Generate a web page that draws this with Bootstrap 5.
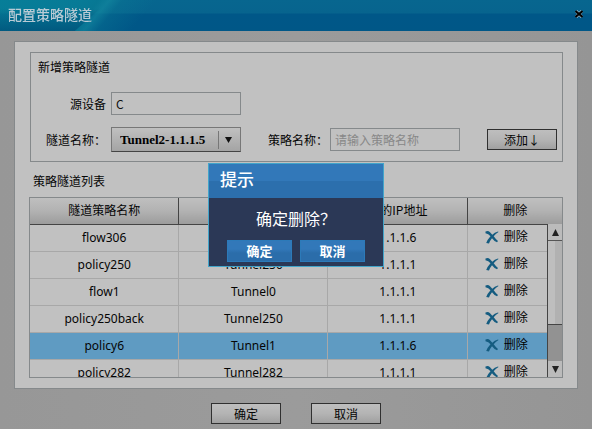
<!DOCTYPE html>
<html lang="zh-CN">
<head>
<meta charset="utf-8">
<meta name="viewport" content="width=device-width, initial-scale=1">
<title>配置策略隧道</title>
<link href="https://cdn.jsdelivr.net/npm/bootstrap@5.3.0/dist/css/bootstrap.min.css" rel="stylesheet">
<style>
body { font: 12px/16px "Noto Sans", "Noto Sans CJK SC", sans-serif; color: #050505; background: linear-gradient(90deg, #979797, #9b9b9b 50%, #959595); }
.zh { font-family: "Noto Sans CJK SC", sans-serif; }
.title-bar { height: 31px; padding: 0 8px; background: linear-gradient(#07668f 0, #07648e 13px, #005788 14px, #005787 100%); }
.title-bar::before { content: ""; position: absolute; inset: 0; background: linear-gradient(130deg, #078a9daa 0, #07899c99 60px, #07849799 76px, #148fa299 84px, #0a7d9655 94px, #0a729300 120px); }
.title-bar::after { content: ""; position: absolute; left: 0; top: 0; bottom: 0; width: 110px; background: linear-gradient(#004f7800 8px, #004f78bb 100%); clip-path: polygon(0 0, 100% 0, 68% 100%, 0 100%); }
.title-bar h1 { font-size: 14px; line-height: 20px; font-weight: 500; color: #b9cbd5; position: relative; z-index: 1; margin-top: -4px; }
.close-x { width: 10px; height: 10px; margin-top: -3px; position: relative; z-index: 1; }
.panel { margin: 10px 14px 0; padding: 10px 14px; background: #c1c1c1; border: 1px solid #85898b; }
.group-box { margin-left: 1px; border: 1px solid #85898b; padding: 5px 5px 9px 0; }
.group-box h2, .list-title { font-size: 12px; line-height: 18px; font-weight: 400; }
.group-box h2 { padding-left: 7px; }
.lbl { width: 80px; padding-right: 5px; text-align: right; }
.lbl.second { width: 89px; padding-right: 2px; }
.box { width: 130px; height: 23px; border: 1px solid #85898b; border-radius: 0; background: #c1c1c1; padding: 0 4px; font-size: 12px; color: #111; }
.box::placeholder { color: #888; opacity: 1; }
.drop { width: 130px; height: 25px; padding: 0 8px; appearance: none; border: 1px solid #777; border-bottom-color: #444; border-radius: 0; font: bold 13px "Liberation Serif", serif; color: #000;
  background: url("data:image/svg+xml,%3Csvg xmlns='http://www.w3.org/2000/svg' width='22' height='18'%3E%3Cpath d='M.5 0v18' stroke='%23777'/%3E%3Cpath d='M7 6h7l-3.500 6z' fill='%23111'/%3E%3C/svg%3E") right 0 center no-repeat, linear-gradient(#c0c0c0, #a4a4a4); }
.tool-btn { width: 70px; height: 21px; padding: 0; border: 1px solid #303030; border-radius: 0; background: linear-gradient(#bebebe, #b4b4b4 50%, #a0a0a0); font-size: 12px; line-height: 18px; color: #050505; }
.tool-btn:hover { border-color: #303030; }
.list-title { margin: 10px 0 7px 4px; }
.grid-box { height: 181px; border: 1px solid #85898b; }
.grid-table { table-layout: fixed; line-height: 16px; }
.grid-table th { height: 26px; padding: 0 0 1px; font-weight: 400; vertical-align: middle; background: linear-gradient(#bfbfbf, #b2b2b2 50%, #9c9c9c); border-bottom: 1px solid #444; border-right: 1px solid #444; }
.grid-table td { height: 27px; padding: 1px 0 0; vertical-align: middle; border-bottom: 1px solid #a8a8a8; border-right: 1px solid #a8a8a8; font-family: "Noto Sans", "Noto Sans CJK SC", sans-serif; }
.grid-table th:last-child, .grid-table td:last-child { border-right: 0; }
.grid-table td:last-child { padding: 0 18px 2px 0; }
.grid-table .picked td { background: #5f9bc2; }
.c1 { width: 28%; } .c2 { width: 28%; } .c3 { width: 26.3%; }
.del { display: inline-flex; align-items: center; font-size: 12px; line-height: 16px; padding: 0; border: 0; border-radius: 0; color: #000; }
.del svg { width: 14px; height: 14px; margin-right: 5px; }
.scroller { top: 26px; width: 15px; border-left: 1px solid #444; background: #929292; }
.scroller button { height: 16px; padding: 0; border: 0; background: #bbb; line-height: 0; }
.scroller .thumb { height: 85px; border-top: 1px solid #555; border-bottom: 1px solid #444; background: linear-gradient(90deg, #bebebe 50%, #b1b1b1 50%); }
.actions { padding: 14px 0 4px; gap: 30px; }
.prompt { width: 176px; border: 1px solid #42a5ca; background: #2b3856; color: #fff; }
.prompt h2 { height: 34px; padding-left: 11px; font-size: 17px; line-height: 30px; font-weight: 500; background: linear-gradient(#3278b9 50%, #2c6fad 50%); }
.prompt p { font-size: 16px; line-height: 24px; padding: 8px 0 10px; }
.prompt .btn { width: 65px; height: 22px; padding: 0; border: 1px solid #2c7ab9; border-radius: 0; background: linear-gradient(#3278b9 40%, #2b6daa 60%); color: #fff; font-weight: 700; font-size: 13px; line-height: 20px; }
</style>
<script src="https://cdn.jsdelivr.net/npm/bootstrap@5.3.0/dist/js/bootstrap.bundle.min.js"></script>
</head>
<body>
<header class="title-bar position-relative d-flex align-items-center justify-content-between">
  <h1 class="zh mb-0">配置策略隧道</h1>
  <button type="button" class="close-x btn p-0 border-0 d-flex align-items-center justify-content-center" aria-label="关闭">
    <svg width="8" height="8" viewBox="0 0 8 8"><path d="M1 1l6 6M7 1L1 7" stroke="#a9c4d2" stroke-width="3"/><path d="M.5 1l7 6M7.500 1L.5 7" stroke="#000" stroke-width="2.200"/></svg>
  </button>
</header>
<main class="zh">
  <section class="panel">
    <form class="group-box">
      <h2 class="mb-0">新增策略隧道</h2>
      <div class="d-flex align-items-center mt-3">
        <label class="lbl" for="device">源设备</label>
        <input class="box" id="device" type="text" value="C">
      </div>
      <div class="d-flex align-items-center mt-2 pt-1">
        <label class="lbl" for="tunnel">隧道名称：</label>
        <select class="drop" id="tunnel"><option>Tunnel2-1.1.1.5</option></select>
        <label class="lbl second" for="policy">策略名称：</label>
        <input class="box" id="policy" type="text" placeholder="请输入策略名称">
        <button type="button" class="btn tool-btn ms-auto">添加↓</button>
      </div>
    </form>
    <h2 class="list-title">策略隧道列表</h2>
    <div class="grid-box position-relative overflow-hidden">
      <table class="grid-table w-100 text-center">
        <thead><tr><th class="c1">隧道策略名称</th><th class="c2">隧道名称</th><th class="c3">目的IP地址</th><th>删除</th></tr></thead>
        <tbody id="rows"></tbody>
      </table>
      <div class="scroller position-absolute end-0 bottom-0 d-flex flex-column">
        <button type="button" aria-label="向上滚动"><svg width="7" height="7" viewBox="0 0 7 7"><path d="M0 7L3.500 0L7 7z" fill="#222"/></svg></button>
        <div class="thumb"></div>
        <button type="button" class="mt-auto" aria-label="向下滚动"><svg width="7" height="7" viewBox="0 0 7 7"><path d="M0 0h7L3.500 7z" fill="#222"/></svg></button>
      </div>
    </div>
  </section>
  <div class="actions d-flex justify-content-center">
    <button type="button" class="btn tool-btn">确定</button>
    <button type="button" class="btn tool-btn">取消</button>
  </div>
</main>
<div class="position-fixed top-0 start-0 w-100 vh-100 d-flex align-items-center justify-content-center">
  <div class="prompt zh" role="dialog" aria-modal="true" aria-labelledby="prompt-title">
    <h2 class="m-0" id="prompt-title">提示</h2>
    <p class="m-0 text-center">确定删除？</p>
    <div class="d-flex justify-content-center gap-2 pb-1">
      <button type="button" class="btn">确定</button>
      <button type="button" class="btn">取消</button>
    </div>
  </div>
</div>
<script>
const rows = [
  ["flow306", "Tunnel306", "1.1.1.6"],
  ["policy250", "Tunnel250", "1.1.1.1"],
  ["flow1", "Tunnel0", "1.1.1.1"],
  ["policy250back", "Tunnel250", "1.1.1.1"],
  ["policy6", "Tunnel1", "1.1.1.6"],
  ["policy282", "Tunnel282", "1.1.1.1"]
];
const cross = '<svg viewBox="0 0 14 14"><path d="M.5 1.500Q3 .2 4.800 2L7.300 4.800Q9.500 2.500 13 1.500L13.500 2Q10.500 3.800 8.700 6.200Q10.500 8.800 13 11L12 12.300Q9 11 7 8.200Q4.800 10.800 4 13.500L1.200 13Q2.500 9.500 5.500 6.300Q3.500 3.500 .5 3.200z" fill="#155c80"/></svg>';
document.getElementById("rows").innerHTML = rows.map(r =>
  `<tr class="${r[0] === "policy6" ? "picked" : ""}">${r.map(c => `<td>${c}</td>`).join("")}<td><button type="button" class="btn del">${cross}删除</button></td></tr>`
).join("");
</script>
</body>
</html>
